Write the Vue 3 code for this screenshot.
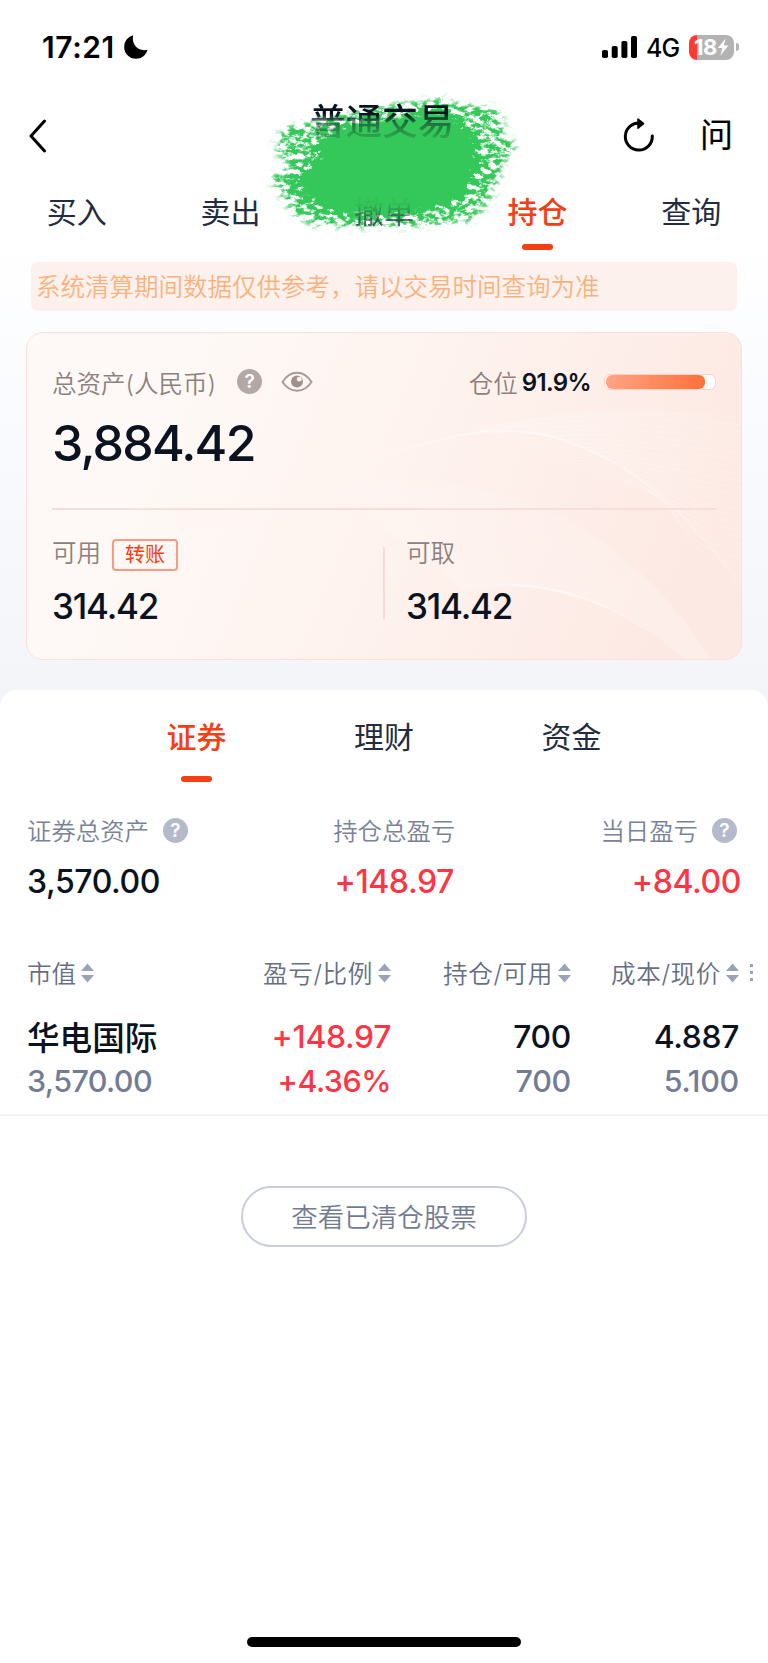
<template>
  <div class="page">
    <header class="status">
      <span class="time">17:21</span>
      <svg class="moon" viewBox="0 0 24 24"><path d="M9.2 0.3C7.2 8.2 12.8 17 23.6 14.8C21.8 20.6 17.4 23.8 12 23.8C5.4 23.8 0.2 18.6 0.2 12C0.2 6.4 3.8 1.8 9.2 0.3Z" /></svg>
      <svg class="signal" viewBox="0 0 36 22">
        <rect x="0" y="14" width="6" height="8" rx="1.8" />
        <rect x="9.7" y="10" width="6" height="12" rx="1.8" />
        <rect x="19.4" y="5" width="6" height="17" rx="1.8" />
        <rect x="29" y="0" width="6" height="22" rx="1.8" />
      </svg>
      <span class="net">4G</span>
      <div class="battery">
        <span class="level">18</span>
        <svg viewBox="0 0 12 18"><path d="M8.6 0.5L0.8 10H5.4L3.4 17.5L11.4 7.6H6.8Z" fill="#fff" /></svg>
      </div>
      <i class="nub"></i>
    </header>

    <nav class="nav">
      <svg class="back" viewBox="0 0 18 34"><path d="M15.5 2L2 17L15.5 32" /></svg>
      <h1 class="title">普通交易</h1>
      <svg class="refresh" viewBox="0 0 32 34">
        <path d="M29.3 18A13.5 13.5 0 1 1 17.5 5.2" />
        <path class="tip" d="M15 1L20.6 5.6L15 10.2Z" />
      </svg>
      <span class="ask">问</span>
    </nav>

    <div class="tabs">
      <div v-for="t in tabs" :key="t" class="tab" :class="{ on: t === '持仓', smudged: t === '撤单' }">{{ t }}</div>
    </div>

    <!-- marker scribble over the account name -->
    <svg class="scribble" viewBox="0 0 280 150">
      <defs>
        <filter id="rough" x="0" y="0" width="280" height="150" filterUnits="userSpaceOnUse" color-interpolation-filters="sRGB">
          <feGaussianBlur in="SourceAlpha" stdDeviation="6 4" result="soft" />
          <feTurbulence type="fractalNoise" baseFrequency="0.13 0.2" numOctaves="5" seed="7" result="noise" />
          <feColorMatrix in="noise" type="matrix" values="0 0 0 0 0  0 0 0 0 0  0 0 0 0 0  2.8 0 0 0 -0.9" result="grain" />
          <feComposite in="soft" in2="grain" operator="arithmetic" k1="0" k2="1.15" k3="0.9" k4="-0.5" result="sum" />
          <feComponentTransfer in="sum" result="mix">
            <feFuncA type="linear" slope="2" intercept="-0.5" />
          </feComponentTransfer>
          <feComposite in="mix" in2="soft" operator="arithmetic" k1="2.2" k2="0" k3="0" k4="0" result="edge" />
          <feFlood flood-color="#34c759" />
          <feComposite in2="edge" operator="in" />
        </filter>
      </defs>
      <g filter="url(#rough)">
        <path d="M30 38L84 24L140 14L194 7L206 12L250 18L256 42L268 58L256 72L248 96L238 116L222 132L170 138L110 139L60 136L40 122L26 98L16 86L40 76L24 62Z" fill-opacity="0.52" />
        <path d="M72 46L130 30L192 22L218 42L226 66L218 94L196 114L150 122L96 124L66 112L46 92L72 68Z" />
      </g>
    </svg>

    <div class="notice">系统清算期间数据仅供参考，请以交易时间查询为准</div>

    <section class="card">
      <svg class="waves" viewBox="0 0 716 327" preserveAspectRatio="none">
        <defs>
          <linearGradient id="w" x1="0" y1="0" x2="1" y2="0">
            <stop offset="0" stop-color="#fff" stop-opacity="0" />
            <stop offset="0.5" stop-color="#fff" stop-opacity="0.55" />
            <stop offset="1" stop-color="#fff" stop-opacity="0.1" />
          </linearGradient>
          <linearGradient id="v" x1="0" y1="0" x2="0" y2="1">
            <stop offset="0" stop-color="#fff" stop-opacity="0.1" />
            <stop offset="1" stop-color="#fff" stop-opacity="0.25" />
          </linearGradient>
        </defs>
        <path d="M300 140C400 110 460 85 530 105C610 130 660 180 716 256V90C600 65 530 80 470 92Z" fill="url(#w)" opacity="0.4" />
        <path d="M300 140C400 110 460 85 530 105C610 130 660 180 716 256" fill="none" stroke="url(#w)" stroke-width="2" />
        <path d="M300 150C470 130 600 190 684 327H661C600 270 520 240 440 260Z" fill="url(#v)" />
        <path d="M410 258C520 235 600 275 661 327" fill="none" stroke="url(#w)" stroke-width="2.4" />
        <path v-for="n in 22" :key="n" :d="wave(n)" class="line" />
      </svg>
      <div class="asset-head">
        <span class="label">总资产(人民币)</span>
        <span class="help warm">?</span>
        <svg class="eye" viewBox="0 0 32 22">
          <path d="M1.5 11C9 -1.5 23 -1.5 30.5 11C23 22.5 9 22.5 1.5 11Z" fill="none" stroke="#a89b98" stroke-width="2" />
          <circle cx="16" cy="10.5" r="6" fill="#a0918e" />
          <circle cx="18.3" cy="8.2" r="2.4" fill="#fdf5f1" />
        </svg>
        <span class="label pos">仓位</span>
        <b class="percent">91.9%</b>
        <div class="bar"><div class="fill" :style="{ width: ratio + '%' }"></div></div>
      </div>
      <div class="amount">3,884.42</div>
      <div class="split">
        <div class="cell">
          <div class="cell-head"><span class="label">可用</span><span class="tag">转账</span></div>
          <div class="num">314.42</div>
        </div>
        <div class="cell second">
          <div class="cell-head"><span class="label">可取</span></div>
          <div class="num">314.42</div>
        </div>
      </div>
    </section>

    <main class="sheet">
      <div class="subtabs">
        <div v-for="t in subtabs" :key="t" class="tab" :class="{ on: t === '证券' }">{{ t }}</div>
      </div>

      <div class="stats">
        <div v-for="s in stats" :key="s.name" class="stat">
          <div class="stat-name">{{ s.name }}<span v-if="s.help" class="help">?</span></div>
          <div class="stat-value" :class="{ up: s.up }">{{ s.value }}</div>
        </div>
      </div>

      <div class="grid head">
        <div v-for="h in heads" :key="h" class="th">
          <span>{{ h }}</span><svg class="sort" viewBox="0 0 13 20"><path d="M6.5 0.5L13 8H0ZM6.5 19.5L0 12H13Z" /></svg>
        </div>
        <div class="dots"><i></i><i></i><i></i></div>
      </div>

      <div v-for="r in rows" :key="r.name" class="grid row">
        <div><p class="name">{{ r.name }}</p><p class="sub">{{ r.market }}</p></div>
        <div class="up"><p>{{ r.profit }}</p><p class="sub">{{ r.rate }}</p></div>
        <div><p>{{ r.hold }}</p><p class="sub">{{ r.usable }}</p></div>
        <div><p>{{ r.cost }}</p><p class="sub">{{ r.price }}</p></div>
      </div>

      <button class="cleared">查看已清仓股票</button>
      <div class="home"></div>
    </main>
  </div>
</template>

<script setup>
import { ref } from "vue";

const tabs = ["买入", "卖出", "撤单", "持仓", "查询"];
const subtabs = ["证券", "理财", "资金"];
const ratio = ref(91.9);

const stats = [
  { name: "证券总资产", value: "3,570.00", help: true },
  { name: "持仓总盈亏", value: "+148.97", up: true },
  { name: "当日盈亏", value: "+84.00", up: true, help: true },
];

const heads = ["市值", "盈亏/比例", "持仓/可用", "成本/现价"];
const rows = [
  {
    name: "华电国际",
    market: "3,570.00",
    profit: "+148.97",
    rate: "+4.36%",
    hold: "700",
    usable: "700",
    cost: "4.887",
    price: "5.100",
  },
];

// fine contour lines on the right side of the card
function wave(n) {
  const y = 78 + n * 7;
  return `M${440 + n * 8} ${92 + n * 3}C${530 + n * 6} ${76 + n * 4} 640 ${y - 8} 716 ${y}`;
}
</script>

<style>
body{ background: #fff; }
</style>

<style scoped>
.page{
  position: relative;
  width: 768px;
  height: 1663px;
  overflow: hidden;
  display: flex;
  flex-direction: column;
  box-sizing: border-box;
  background: linear-gradient(#fff 240px, #fafbfe 400px, #f3f5f9 690px);
  font-family: Inter, "Noto Sans CJK SC", sans-serif;
  color: #0b1320;
}
.page *{ box-sizing: border-box; }
p, h1{ margin: 0; font-weight: inherit; }

.status{
  height: 94px;
  padding: 0 29px 0 42px;
  display: flex;
  align-items: center;
  color: #000;
}
.time{ font-size: 30px; font-weight: 600; width: 82px; letter-spacing: 0.6px; white-space: nowrap; }
.moon{ width: 24px; height: 24px; }
.signal{ width: 36px; height: 22px; margin-left: auto; }
.net{ font-size: 25px; font-weight: 500; width: 36px; margin: 1px 7px 0 8px; white-space: nowrap; letter-spacing: -0.9px; }
.battery{
  width: 45px;
  height: 25px;
  border-radius: 8px;
  display: flex;
  align-items: center;
  justify-content: center;
  color: #fff;
  background: linear-gradient(90deg, #ff3b30 8px, #b3b3b3 8px);
}
.level{ font-size: 22px; font-weight: 700; letter-spacing: -0.5px; }
.battery svg{ width: 12px; height: 18px; }
.nub{ width: 3px; height: 8px; margin-left: 2px; border-radius: 0 3px 3px 0; background: #b3b3b3; }

.nav{
  height: 85px;
  padding: 0 35px 0 29px;
  display: flex;
  align-items: center;
}
.nav svg{ fill: none; stroke: #000; stroke-width: 3; stroke-linecap: round; stroke-linejoin: round; }
.back{ width: 18px; height: 34px; margin-top: -2px; }
.title{
  position: relative;
  z-index: 1;
  margin: -29px 0 0 263px;
  font-size: 36px;
  font-weight: 500;
  line-height: 40px;
  mask-image: linear-gradient(#000 30%, rgba(0,0,0,0.5) 50%, rgba(0,0,0,0.2) 85%);
}
.refresh{ width: 32px; height: 34px; margin: -4px 0 0 auto; }
.nav .tip{ fill: #000; stroke-width: 1.5; }
.ask{ margin-left: 45px; margin-top: -3px; font-size: 33px; line-height: 40px; color: #000; -webkit-text-stroke: 0.2px #000; }

.tabs{ display: grid; grid-template-columns: repeat(5, 1fr); height: 71px; }
.tab{
  position: relative;
  text-align: center;
  font-size: 30px;
  line-height: 66px;
  color: #232b40;
}
.tab.on{ color: #f43e14; font-weight: 500; }
.tab.on::after{
  content: "";
  position: absolute;
  left: 50%;
  top: 65px;
  width: 31px;
  height: 6px;
  margin-left: -15.5px;
  border-radius: 3px;
  background: #f43e14;
}
.smudged{ z-index: 1; mask-image: linear-gradient(rgba(0,0,0,0.05) 35%, rgba(0,0,0,0.75) 62%); }

.scribble{ position: absolute; left: 250px; top: 90px; width: 280px; height: 150px; }

.notice{
  margin: 12px 31px 0;
  height: 49px;
  padding-left: 5px;
  border-radius: 7px;
  background: #fcf1ed;
  color: #fab27d;
  font-size: 24.5px;
  line-height: 50px;
  font-weight: 350;
}

.card{
  position: relative;
  margin: 21px 26px 0;
  height: 328px;
  padding: 0 25px;
  border: 1px solid #fde0d9;
  border-radius: 17px;
  overflow: hidden;
  background: linear-gradient(112deg, #fef9f6 20%, #fef3ef 50%, #fde9e3 90%);
}
.card > div{ position: relative; }
.waves{ position: absolute; left: 0; top: 0; width: 716px; height: 327px; }
.line{ fill: none; stroke: #fff; stroke-width: 1; opacity: 0.22; }
.label{ font-size: 24.5px; font-weight: 350; color: #8d817f; }
.asset-head{ height: 66px; padding-top: 31px; display: flex; align-items: center; }
.asset-head .label{ padding-top: 2px; }
.help{
  display: inline-block;
  flex: none;
  width: 25px;
  height: 25px;
  border-radius: 50%;
  background: #b4b9cb;
  color: #fff;
  font-size: 19px;
  font-weight: 600;
  line-height: 25px;
  text-align: center;
}
.warm{ background: #b3a8a5; margin-left: 21px; }
.eye{ width: 32px; height: 22px; margin-left: 19px; }
.pos{ margin-left: auto; }
.percent{ margin: 1px 13px 0 4px; font-size: 24px; font-weight: 600; letter-spacing: -0.6px; }
.bar{ width: 112px; height: 16px; padding: 0 1px; border: 1px solid #fdd3c7; border-radius: 6px; background: #fff; }
.fill{ height: 14px; border-radius: 6px; background: linear-gradient(90deg, #ffa485, #ff7038); }
.amount{
  height: 111px;
  border-bottom: 2px solid #f6dfdb;
  font-size: 50px;
  font-weight: 500;
  line-height: 89px;
  letter-spacing: -1.8px;
}
.split{ display: flex; padding-top: 27px; }
.cell{ width: 331px; height: 92px; }
.second{ padding-left: 23px; position: relative; }
.second::before{ content: ""; position: absolute; left: 0; top: 10px; width: 2px; height: 72px; background: #f4dcd8; }
.cell-head{ display: flex; align-items: center; height: 36px; }
.cell-head .label{ margin-top: -8px; }
.tag{
  width: 66px;
  height: 32px;
  margin-left: 11px;
  margin-top: -1px;
  border: 2px solid #f99a83;
  border-radius: 4px;
  color: #f43e14;
  font-size: 20px;
  line-height: 28px;
  text-align: center;
}
.num{ font-size: 35px; font-weight: 500; line-height: 67px; letter-spacing: -1.2px; }

.sheet{
  flex: 1;
  margin-top: 30px;
  border-radius: 17px 17px 0 0;
  background: #fff;
  display: flex;
  flex-direction: column;
}
.subtabs{ display: grid; grid-template-columns: repeat(3, 187.5px); justify-content: center; height: 122px; }
.subtabs .tab{ line-height: 94px; }
.subtabs .tab::after{ top: 86px; }

.stats{ display: flex; justify-content: space-between; padding: 0 27px; height: 132px; }
.stat-name{ display: flex; align-items: center; height: 34px; font-size: 24.4px; font-weight: 350; color: #7a8299; }
.stat-name .help{ margin: 2px 0 0 14px; }
.stat-value{ font-size: 32px; line-height: 71px; font-weight: 500; letter-spacing: -0.4px; }
.stat:nth-child(2) .stat-value{ text-align: center; }
.stat:nth-child(3){ text-align: right; }
.stat:nth-child(3) .stat-name{ justify-content: flex-end; padding-right: 4px; }
.up{ color: #ff3546; }

.grid{
  display: grid;
  grid-template-columns: 130px 234px 180px 168px 29px;
  padding-left: 27px;
}
.head{ height: 60px; align-items: center; color: #656e84; }
.th{ display: flex; align-items: center; justify-content: flex-end; white-space: nowrap; font-size: 24.6px; font-weight: 350; }
.th span{ margin-top: -4px; letter-spacing: 0.6px; }
.th:first-child{ justify-content: flex-start; }
.th:first-child span{ letter-spacing: 0; }
.sort{ width: 13px; height: 20px; margin: -3px 0 0 5px; fill: #9ba3b6; }
.dots{ width: 3px; margin: -3px 0 0 11px; display: grid; gap: 4px; }
.dots i{ width: 3px; height: 3px; background: #9ba3b6; }
.row{
  height: 112px;
  padding-top: 10px;
  border-bottom: 2px solid #f2f2f4;
  text-align: right;
  font-size: 31.8px;
  font-weight: 500;
}
.row > div:first-child{ text-align: left; }
.row p{ line-height: 46px; height: 46px; letter-spacing: -0.3px; white-space: nowrap; }
.row .name{ font-size: 32.6px; line-height: 48px; letter-spacing: 0; }
.row .sub{ height: 42px; line-height: 42px; font-size: 30.5px; color: #737c94; }
.row div:first-child .sub{ letter-spacing: -0.6px; }
.row .up .sub{ color: inherit; letter-spacing: -0.5px; }

.cleared{
  align-self: center;
  width: 286px;
  height: 61px;
  margin-top: 70px;
  padding: 0;
  border: 2px solid #c9cddb;
  border-radius: 31px;
  background: #fff;
  font: 350 26.5px/56px Inter, "Noto Sans CJK SC", sans-serif;
  color: #727b92;
}
.home{ align-self: center; width: 274px; height: 10px; margin: auto 0 16px; border-radius: 5px; background: #000; }
</style>
